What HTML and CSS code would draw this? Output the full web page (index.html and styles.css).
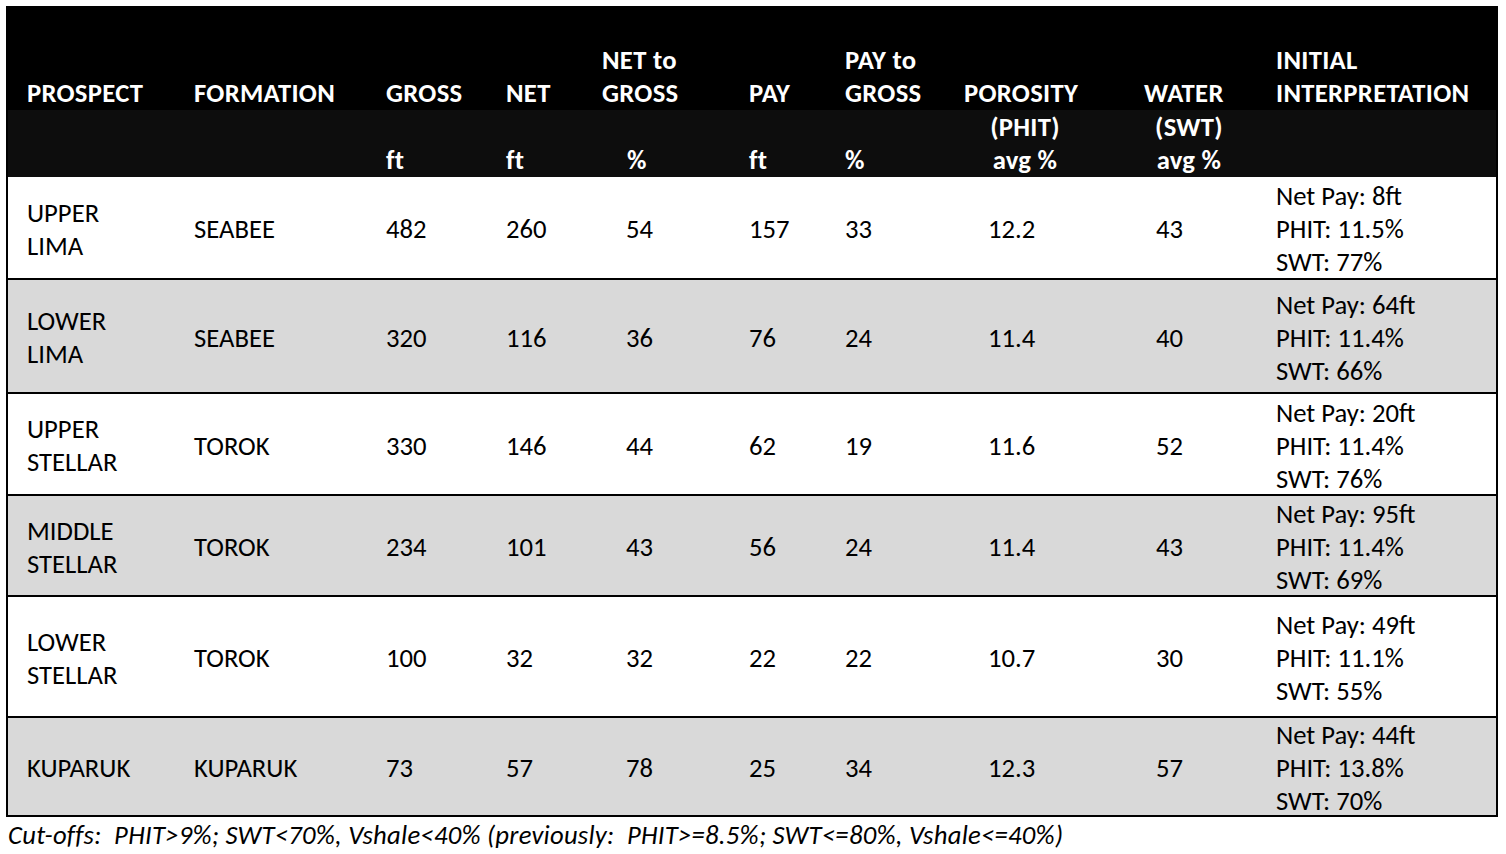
FILE: index.html
```html
<!DOCTYPE html>
<html lang="en">
<head>
<meta charset="utf-8">
<title>Prospect summary</title>
<link rel="stylesheet" href="styles.css">
</head>
<body>
<div class="sheet">
  <div class="table">
    <div class="head">
      <div class="row head-top">
        <div class="c c1">PROSPECT</div>
        <div class="c">FORMATION</div>
        <div class="c">GROSS</div>
        <div class="c">NET</div>
        <div class="c">NET to<br>GROSS</div>
        <div class="c">PAY</div>
        <div class="c">PAY to<br>GROSS</div>
        <div class="c">POROSITY</div>
        <div class="c">WATER</div>
        <div class="c">INITIAL<br>INTERPRETATION</div>
      </div>
      <div class="row head-sub">
        <div class="c c1"></div>
        <div class="c"></div>
        <div class="c">ft</div>
        <div class="c">ft</div>
        <div class="c pct">%</div>
        <div class="c">ft</div>
        <div class="c">%</div>
        <div class="c sub por">(PHIT)<br>avg %</div>
        <div class="c sub wat">(SWT)<br>avg %</div>
        <div class="c"></div>
      </div>
    </div>

    <div class="row body-row r1">
      <div class="c c1">UPPER<br>LIMA</div>
      <div class="c">SEABEE</div>
      <div class="c">482</div>
      <div class="c">260</div>
      <div class="c v5">54</div>
      <div class="c">157</div>
      <div class="c">33</div>
      <div class="c v8">12.2</div>
      <div class="c v9">43</div>
      <div class="c">Net Pay: 8ft<br>PHIT: 11.5%<br>SWT: 77%</div>
    </div>

    <div class="row body-row gray r2">
      <div class="c c1">LOWER<br>LIMA</div>
      <div class="c">SEABEE</div>
      <div class="c">320</div>
      <div class="c">116</div>
      <div class="c v5">36</div>
      <div class="c">76</div>
      <div class="c">24</div>
      <div class="c v8">11.4</div>
      <div class="c v9">40</div>
      <div class="c">Net Pay: 64ft<br>PHIT: 11.4%<br>SWT: 66%</div>
    </div>

    <div class="row body-row r3">
      <div class="c c1">UPPER<br>STELLAR</div>
      <div class="c">TOROK</div>
      <div class="c">330</div>
      <div class="c">146</div>
      <div class="c v5">44</div>
      <div class="c">62</div>
      <div class="c">19</div>
      <div class="c v8">11.6</div>
      <div class="c v9">52</div>
      <div class="c">Net Pay: 20ft<br>PHIT: 11.4%<br>SWT: 76%</div>
    </div>

    <div class="row body-row gray r4">
      <div class="c c1">MIDDLE<br>STELLAR</div>
      <div class="c">TOROK</div>
      <div class="c">234</div>
      <div class="c">101</div>
      <div class="c v5">43</div>
      <div class="c">56</div>
      <div class="c">24</div>
      <div class="c v8">11.4</div>
      <div class="c v9">43</div>
      <div class="c">Net Pay: 95ft<br>PHIT: 11.4%<br>SWT: 69%</div>
    </div>

    <div class="row body-row r5">
      <div class="c c1">LOWER<br>STELLAR</div>
      <div class="c">TOROK</div>
      <div class="c">100</div>
      <div class="c">32</div>
      <div class="c v5">32</div>
      <div class="c">22</div>
      <div class="c">22</div>
      <div class="c v8">10.7</div>
      <div class="c v9">30</div>
      <div class="c">Net Pay: 49ft<br>PHIT: 11.1%<br>SWT: 55%</div>
    </div>

    <div class="row body-row gray r6">
      <div class="c c1">KUPARUK</div>
      <div class="c">KUPARUK</div>
      <div class="c">73</div>
      <div class="c">57</div>
      <div class="c v5">78</div>
      <div class="c">25</div>
      <div class="c">34</div>
      <div class="c v8">12.3</div>
      <div class="c v9">57</div>
      <div class="c">Net Pay: 44ft<br>PHIT: 13.8%<br>SWT: 70%</div>
    </div>
  </div>
  <p class="note">Cut-offs:&nbsp; PHIT&gt;9%; SWT&lt;70%, Vshale&lt;40% (previously:&nbsp; PHIT&gt;=8.5%; SWT&lt;=80%, Vshale&lt;=40%)</p>
</div>
</body>
</html>
```

FILE: styles.css
```css
* { box-sizing: border-box; }

body {
  margin: 0;
  background: #fff;
  color: #000;
  font-family: Carlito, Calibri, Lato, "Liberation Sans", sans-serif;
  font-size: 26.67px;
  line-height: 33px;
}

.sheet {
  padding: 6px 0 0 6px;
}

.table {
  width: 1492px;
  border-left: 2px solid #000;
  border-right: 2px solid #000;
}

.row {
  display: grid;
  grid-template-columns: 186px 192px 120px 96px 147px 96px 119px 180px 132px 1fr;
}

.c { white-space: nowrap; }
.c1 { padding-left: 19px; }

.head {
  background: #000;
  color: #fff;
  font-weight: 700;
  letter-spacing: 0.3px;
}

.head-top {
  height: 104px;
  align-items: end;
}

.head-sub {
  height: 67px;
  background: #0d0d0d;
  align-items: end;
}

.pct { padding-left: 25px; }
.sub { text-align: center; }
.por { width: 122px; }
.wat { width: 90px; }

.body-row {
  grid-template-rows: 100%;
  align-items: center;
  padding-top: 4px;
  border-bottom: 2px solid #000;
}

.gray { background: #d9d9d9; }

.r1 { height: 103px; }
.r2 { height: 114px; }
.r3 { height: 102px; }
.r4 { height: 101px; }
.r5 { height: 121px; }
.r6 { height: 99px; }

.v5 { padding-left: 24px; }
.v8 { padding-left: 24px; }
.v9 { padding-left: 12px; }

.note {
  margin: 0;
  padding-left: 2px;
  font-style: italic;
  letter-spacing: 0.25px;
  line-height: 36px;
}
```
